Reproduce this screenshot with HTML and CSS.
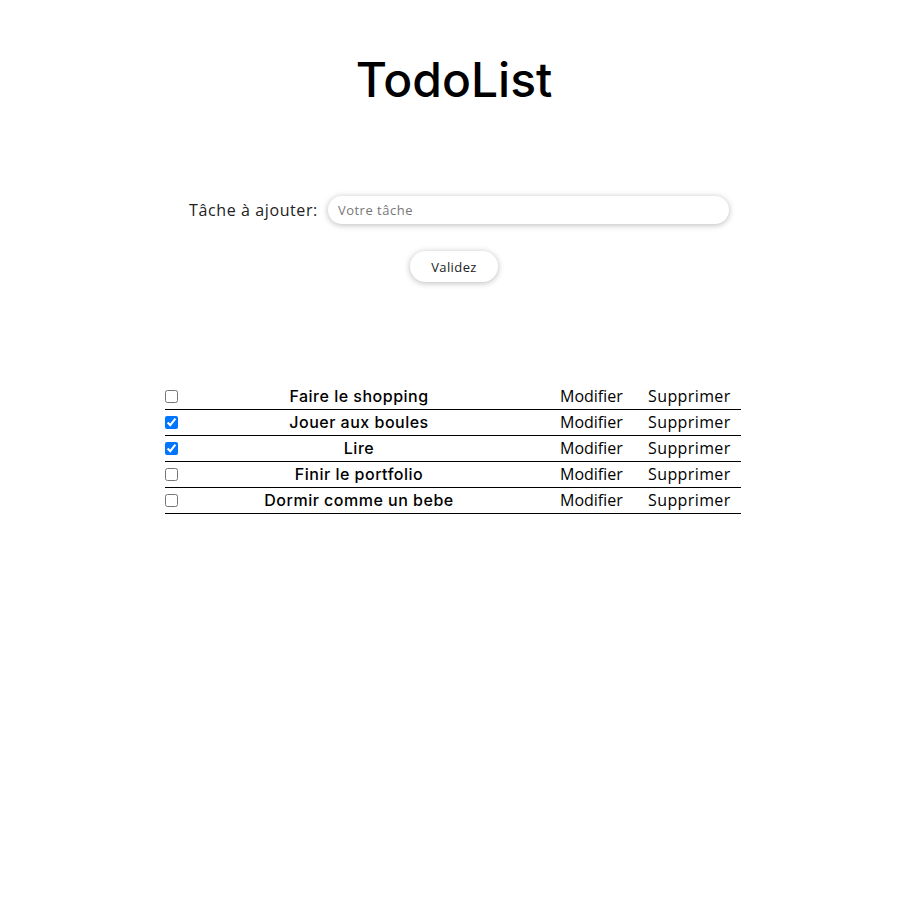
FILE: index.html
```html
<!DOCTYPE html>
<html lang="fr">
<head>
<meta charset="utf-8">
<title>TodoList</title>
<link rel="stylesheet" href="styles.css">
</head>
<body>
<h1 class="title">TodoList</h1>
<form class="add-form">
  <div class="field">
    <label class="label" for="task">Tâche à ajouter:</label>
    <input class="input" id="task" type="text" placeholder="Votre tâche">
  </div>
  <button class="btn" type="button">Validez</button>
</form>
<div class="list">
  <div class="row"><span class="cell-check"><input type="checkbox" class="check"></span><span class="cell-task">Faire le shopping</span><span class="cell-mod">Modifier</span><span class="cell-del">Supprimer</span></div>
  <div class="row"><span class="cell-check"><input type="checkbox" class="check" checked></span><span class="cell-task">Jouer aux boules</span><span class="cell-mod">Modifier</span><span class="cell-del">Supprimer</span></div>
  <div class="row"><span class="cell-check"><input type="checkbox" class="check" checked></span><span class="cell-task">Lire</span><span class="cell-mod">Modifier</span><span class="cell-del">Supprimer</span></div>
  <div class="row"><span class="cell-check"><input type="checkbox" class="check"></span><span class="cell-task">Finir le portfolio</span><span class="cell-mod">Modifier</span><span class="cell-del">Supprimer</span></div>
  <div class="row"><span class="cell-check"><input type="checkbox" class="check"></span><span class="cell-task">Dormir comme un bebe</span><span class="cell-mod">Modifier</span><span class="cell-del">Supprimer</span></div>
</div>
</body>
</html>
```
FILE: styles.css
```css
* { box-sizing: border-box; }
body {
  margin: 0;
  font-family: "Open Sans", "Liberation Sans", sans-serif;
  color: #000;
  background: #fff;
}
.title {
  margin: 52px 0 0;
  text-align: center;
  font-family: Inter, "Open Sans", sans-serif;
  font-size: 48px;
  font-weight: 500;
  line-height: 56px;
  letter-spacing: 0;
}
.add-form {
  display: flex;
  flex-direction: column;
  align-items: center;
  margin-top: 88px;
}
.field {
  display: flex;
  align-items: center;
  gap: 10px;
  margin-left: 10px;
}
.label {
  font-size: 16px;
  letter-spacing: 0.6px;
  color: #222;
}
.input {
  width: 401px;
  height: 28px;
  border: none;
  border-radius: 14px;
  box-shadow: 0 1px 6px rgba(0,0,0,0.28);
  padding: 0 10px;
  font-family: inherit;
  font-size: 13px;
  letter-spacing: 0.5px;
  outline: none;
}
.input::placeholder { color: #777; }
.btn {
  margin-top: 27px;
  width: 88px;
  height: 31px;
  border: none;
  border-radius: 16px;
  background: #fff;
  box-shadow: 0 1px 6px rgba(0,0,0,0.28);
  font-family: inherit;
  font-size: 13px;
  letter-spacing: 0.4px;
  color: #222;
}
.list {
  width: 576px;
  margin: 102px auto 0 165px;
  display: flex;
  flex-direction: column;
}
.row {
  display: flex;
  align-items: center;
  height: 26px;
  padding-bottom: 1px;
  border-bottom: 1px solid #000;
  font-size: 16px;
}
.cell-check { width: 25px; display: flex; align-items: center; }
.check { margin: 0; width: 13px; height: 13px; }
.cell-task { width: 338px; text-align: center; font-family: Inter, "Open Sans", sans-serif; font-weight: 500; letter-spacing: 0.5px; }
.cell-mod { width: 88px; margin-left: 32px; }
.cell-del { flex: 1; letter-spacing: 0.4px; }
```
